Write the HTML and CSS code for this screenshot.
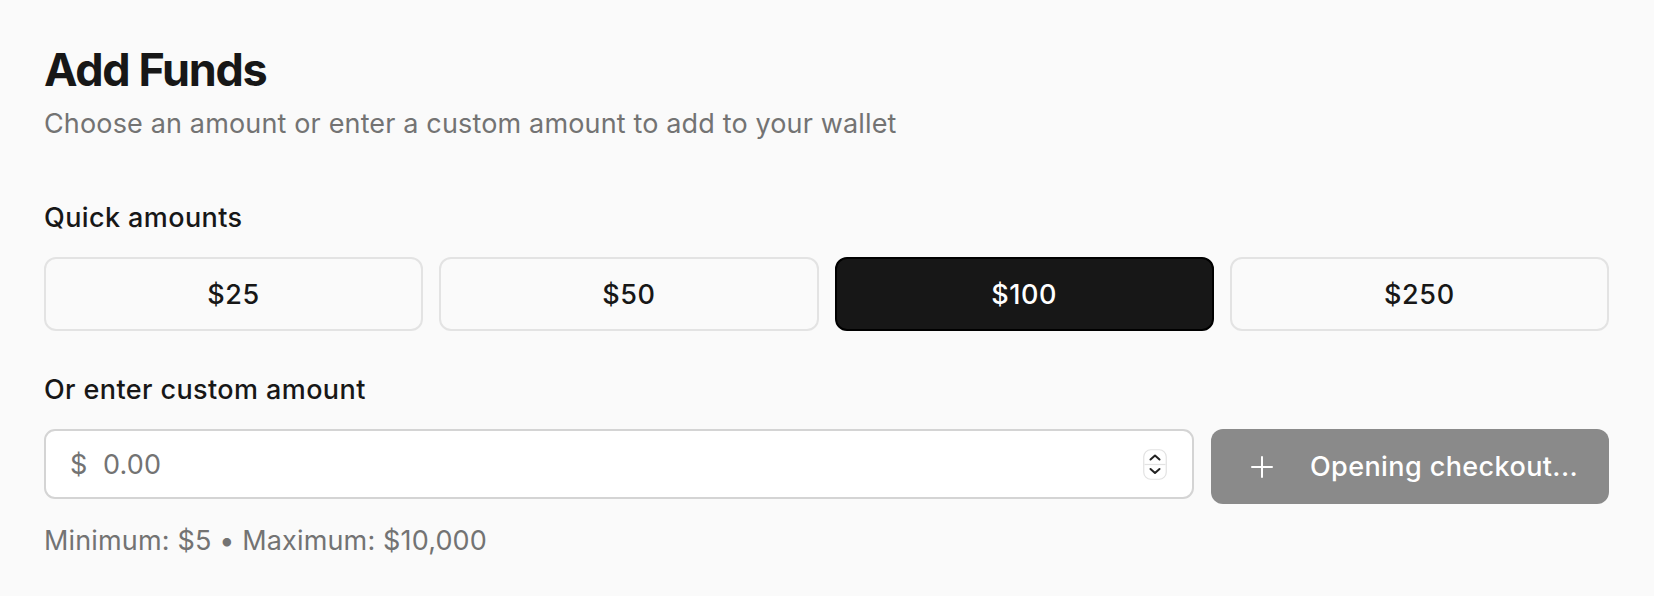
FILE: index.html
```html
<!DOCTYPE html>
<html lang="en">
<head>
<meta charset="utf-8">
<title>Add Funds</title>
<link rel="stylesheet" href="styles.css">
</head>
<body>
<main class="page">
  <h1 class="title">Add Funds</h1>
  <p class="subtitle">Choose an amount or enter a custom amount to add to your wallet</p>

  <section class="group quick">
    <div class="label">Quick amounts</div>
    <div class="amounts">
      <button class="amount">$25</button>
      <button class="amount">$50</button>
      <button class="amount selected">$100</button>
      <button class="amount">$250</button>
    </div>
  </section>

  <section class="group custom">
    <div class="label">Or enter custom amount</div>
    <div class="row">
      <div class="input">
        <span class="currency">$</span>
        <span class="placeholder">0.00</span>
        <svg class="stepper" width="24" height="31" viewBox="0 0 24 31">
          <rect x="0.75" y="0.75" width="22.5" height="29.5" rx="7" fill="#fff" stroke="#e2e2e2" stroke-width="1.2"/>
          <line x1="1.5" y1="15.5" x2="22.5" y2="15.5" stroke="#e2e2e2" stroke-width="1.2"/>
          <path d="M7.5 10.5 L12 6.5 L16.5 10.5" fill="none" stroke="#222" stroke-width="2" stroke-linecap="round" stroke-linejoin="round"/>
          <path d="M7.5 20 L12 24 L16.5 20" fill="none" stroke="#222" stroke-width="2" stroke-linecap="round" stroke-linejoin="round"/>
        </svg>
      </div>
      <button class="checkout">
        <svg class="plus" width="22" height="22" viewBox="0 0 22 22">
          <path d="M11 1 V21 M1 11 H21" stroke="#fff" stroke-width="2" stroke-linecap="round"/>
        </svg>
        <span>Opening checkout...</span>
      </button>
    </div>
  </section>

  <p class="hint">Minimum: $5 • Maximum: $10,000</p>
</main>
</body>
</html>
```

FILE: styles.css
```css
* { box-sizing: border-box; }

html, body {
  margin: 0;
  padding: 0;
  background: #fafafa;
}

body {
  font-family: "Inter", "Noto Sans", "Liberation Sans", sans-serif;
  color: #171717;
}

.page {
  padding: 42px 45px 0 44px;
}

.title {
  margin: 0;
  font-size: 45px;
  line-height: 56px;
  font-weight: 700;
  letter-spacing: -0.03em;
  color: #171717;
}

.subtitle {
  margin: 8px 0 0;
  font-size: 27px;
  line-height: 36px;
  letter-spacing: 0.15px;
  color: #737373;
}

.group { display: flex; flex-direction: column; gap: 21px; }
.quick { margin-top: 58px; }
.custom { margin-top: 41px; }

.label {
  font-size: 27px;
  line-height: 36px;
  font-weight: 500;
  letter-spacing: 0.4px;
  color: #171717;
}

.amounts {
  display: grid;
  grid-template-columns: repeat(4, 1fr);
  gap: 16px;
}

.amount {
  height: 74px;
  border: 2px solid #e3e3e3;
  border-radius: 12px;
  background: #fafafa;
  font-family: inherit;
  font-size: 27px;
  font-weight: 500;
  letter-spacing: 0.6px;
  color: #171717;
  padding: 0;
}

.amount.selected {
  background: #171717;
  border-color: #000;
  color: #fff;
}

.row {
  display: flex;
  align-items: flex-start;
  gap: 17px;
}

.input {
  flex: 1;
  height: 70px;
  background: #fff;
  border: 2px solid #d4d4d4;
  border-radius: 11px;
  display: flex;
  align-items: center;
  padding: 0 25px 0 24px;
  font-size: 27px;
  letter-spacing: 0.15px;
  color: #737373;
}

.currency { width: 33px; }
.placeholder { flex: 1; }
.stepper { display: block; }

.checkout {
  width: 398px;
  height: 75px;
  border: none;
  border-radius: 12px;
  background: #8a8a8a;
  color: #fff;
  font-family: inherit;
  font-size: 27px;
  font-weight: 500;
  letter-spacing: 0.4px;
  display: flex;
  align-items: center;
  gap: 37px;
  padding: 0 0 0 40px;
}

.plus { display: block; }

.hint {
  margin: 19px 0 0;
  font-size: 27px;
  line-height: 36px;
  letter-spacing: 0.15px;
  color: #737373;
}
```
